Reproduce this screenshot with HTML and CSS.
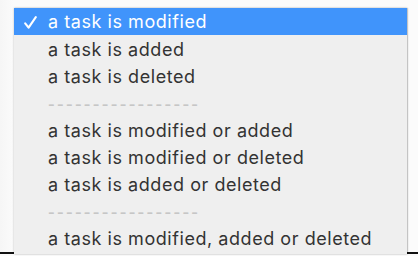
FILE: index.html
```html
<!DOCTYPE html>
<html>
<head>
<meta charset="utf-8">
<link rel="stylesheet" href="styles.css">
</head>
<body>
<div class="stage">
  <ul class="menu">
    <li class="item selected"><svg class="check" width="13" height="13" viewBox="0 0 13 13"><path d="M1.2 7.3 L4.6 11.6 L11.8 1.2" fill="none" stroke="#fff" stroke-width="2.1" stroke-linecap="round" stroke-linejoin="round"/></svg><span>a task is modified</span></li>
    <li class="item">a task is added</li>
    <li class="item">a task is deleted</li>
    <li class="item sep">-----------------</li>
    <li class="item">a task is modified or added</li>
    <li class="item">a task is modified or deleted</li>
    <li class="item">a task is added or deleted</li>
    <li class="item sep">-----------------</li>
    <li class="item">a task is modified, added or deleted</li>
  </ul>
</div>
</body>
</html>
```
FILE: styles.css
```css
html, body {
  margin: 0;
  padding: 0;
  width: 418px;
  height: 256px;
  overflow: hidden;
  background: #fbfbfb;
}
.stage {
  height: 254px;
  padding: 8px 11px 0 14px;
  box-sizing: border-box;
  border-bottom: 2px solid #111;
  background: linear-gradient(to right, #f6f6f6, #fbfbfb 14px);
}
.menu {
  list-style: none;
  margin: 0;
  padding: 0;
  background: #efefef;
  box-shadow: 0 0 2px rgba(0,0,0,0.25), 1px 0 1px rgba(0,0,0,0.15);
  font-family: Inter, "Liberation Sans", Arial, sans-serif;
  font-size: 18px;
  letter-spacing: 0.55px;
  color: #333;
  height: 246px;
}
.item {
  height: 27px;
  line-height: 30px;
  padding-left: 34px;
  white-space: nowrap;
}
.selected {
  background: #4094fb;
  color: #fff;
  padding-left: 10px;
  display: flex;
  align-items: center;
}
.check {
  display: block;
  flex: none;
  margin: 1px 11px 0 0;
}
.sep {
  color: #c6c6c6;
  font-family: "Liberation Sans", Arial, sans-serif;
  font-size: 20px;
  letter-spacing: 2.3px;
}
```
